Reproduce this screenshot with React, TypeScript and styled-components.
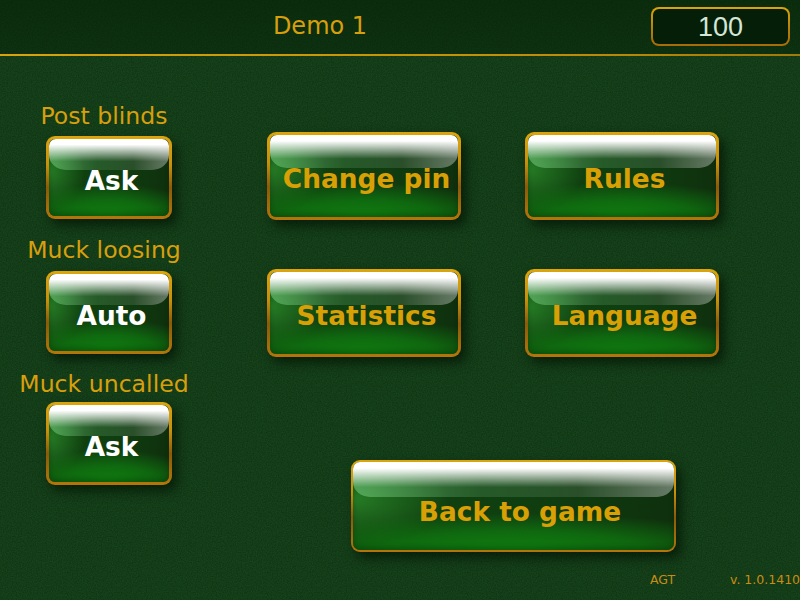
import React from "react";
import styled, { createGlobalStyle } from "styled-components";

const noise =
  "data:image/svg+xml;utf8," +
  encodeURIComponent(
    `<svg xmlns="http://www.w3.org/2000/svg" width="200" height="200"><filter id="n"><feTurbulence type="fractalNoise" baseFrequency="0.8" numOctaves="2" stitchTiles="stitch"/><feColorMatrix values="0 0 0 0 0  0 0 0 0 0  0 0 0 0 0  0 0 0 0.42 -0.1"/></filter><rect width="200" height="200" filter="url(#n)"/></svg>`
  );

const GlobalStyle = createGlobalStyle`
  html, body {
    margin: 0;
    padding: 0;
    background: #143f1c;
  }
  * {
    box-sizing: border-box;
  }
`;

const Page = styled.div`
  width: 800px;
  height: 600px;
  overflow: hidden;
  display: flex;
  flex-direction: column;
  font-family: "DejaVu Sans", Verdana, sans-serif;
  color: #d79f0c;
  background-color: #16441b;
  background-image: url("${noise}");
`;

const Header = styled.header`
  height: 56px;
  flex: none;
  display: flex;
  align-items: flex-start;
  padding-top: 7px;
  background: linear-gradient(rgba(3, 30, 4, 0.55), rgba(3, 30, 4, 0.4));
  border-bottom: 2px solid;
  border-image: linear-gradient(90deg, #d9a30c, #c08c08 70%, #a07a0a) 1;
`;

const Title = styled.h1`
  width: 640px;
  margin: 0 11px 0 0;
  font-size: 24px;
  font-weight: 400;
  line-height: 38px;
  text-align: center;
`;

const Balance = styled.div`
  width: 139px;
  height: 39px;
  padding-top: 2px;
  border: 2px solid transparent;
  border-radius: 8px;
  background:
    linear-gradient(#041e07, #041e07) padding-box,
    linear-gradient(#dba40c, #b67c0a 60%, #a76b08) border-box;
  color: #d6e6d6;
  font-family: "Liberation Sans", Arial, sans-serif;
  font-size: 27px;
  line-height: 33px;
  text-align: center;
`;

const Main = styled.main`
  flex: 1;
  display: flex;
`;

const SettingsColumn = styled.section`
  width: 208px;
  flex: none;
  padding-top: 46px;
  display: flex;
  flex-direction: column;
  align-items: center;
`;

const Setting = styled.div<{ $gap: number; $top: number }>`
  display: flex;
  flex-direction: column;
  align-items: center;
  gap: ${(p) => p.$gap}px;
  margin-top: ${(p) => p.$top}px;
`;

const SettingLabel = styled.div`
  font-size: 23.6px;
  line-height: 28px;
  white-space: nowrap;
`;

const SettingButtonSlot = styled.div`
  margin-left: 10px;
`;

const GlassButton = styled.button<{ $w: number; $h: number; $light?: boolean; $shift?: number; $pad?: number; $edge?: number }>`
  position: relative;
  display: block;
  width: ${(p) => p.$w}px;
  height: ${(p) => p.$h}px;
  padding: ${(p) => p.$pad ?? 6}px 0 0 ${(p) => p.$shift ?? 5}px;
  border: ${(p) => p.$edge ?? 3}px solid transparent;
  border-radius: 9px;
  background:
    radial-gradient(ellipse 80% 42% at 50% 100%, #0f7d0f 0%, rgba(15, 120, 15, 0.75) 50%, rgba(15, 90, 15, 0) 100%) padding-box,
    radial-gradient(ellipse 30% 50% at 0% 42%, rgba(40, 130, 40, 0.9), rgba(40, 130, 40, 0) 100%) padding-box,
    linear-gradient(90deg, #10420f, #0f3d10 60%, #0f300d) padding-box,
    linear-gradient(#dca50c 0%, #c98f0a 35%, #8e5a08 62%, #b5750a 100%) border-box;
  box-shadow:
    5px 6px 11px rgba(0, 15, 0, 0.65),
    inset 0 -3px 5px rgba(0, 30, 0, 0.3);
  color: ${(p) => (p.$light ? "#ffffff" : "#d9a006")};
  font-family: "DejaVu Sans", Verdana, sans-serif;
  font-size: 26.4px;
  font-weight: 700;
  line-height: 1;
  white-space: nowrap;

  &::before {
    content: "";
    position: absolute;
    top: 0;
    left: 0;
    right: 0;
    height: 40%;
    border-radius: 7px 7px 17px 17px / 7px 7px 15px 15px;
    background:
      linear-gradient(#ffffff 0%, #ffffff 18%, rgba(255, 255, 255, 0) 72%),
      linear-gradient(90deg, rgba(130, 215, 140, 0.5), rgba(110, 180, 120, 0.24) 40%, rgba(150, 165, 150, 0.2) 70%, rgba(200, 205, 200, 0.48));
  }
`;

const ActionsColumn = styled.section`
  flex: 1;
  padding: 76px 0 0 59px;
  display: flex;
  flex-direction: column;
`;

const ActionGrid = styled.div`
  display: grid;
  grid-template-columns: 194px 194px;
  grid-auto-rows: 88px;
  column-gap: 64px;
  row-gap: 49px;
`;

const BackRow = styled.div`
  margin: 103px 0 0 84px;
`;

const Footer = styled.footer`
  flex: none;
  height: 48px;
  display: flex;
  justify-content: flex-end;
  padding-top: 20px;
  font-size: 12.5px;
  line-height: 16px;
  color: #c98d12;
`;

const Maker = styled.span`
  width: 80px;
`;

const Version = styled.span`
  width: 70px;
  white-space: nowrap;
`;

export default function App() {
  return (
    <Page>
      <GlobalStyle />
      <Header>
        <Title>Demo 1</Title>
        <Balance>100</Balance>
      </Header>
      <Main>
        <SettingsColumn>
          <Setting $gap={6} $top={0}>
            <SettingLabel>Post blinds</SettingLabel>
            <SettingButtonSlot>
              <GlassButton $w={126} $h={83} $pad={8} $light>Ask</GlassButton>
            </SettingButtonSlot>
          </Setting>
          <Setting $gap={7} $top={17}>
            <SettingLabel>Muck loosing</SettingLabel>
            <SettingButtonSlot>
              <GlassButton $w={126} $h={83} $pad={8} $light>Auto</GlassButton>
            </SettingButtonSlot>
          </Setting>
          <Setting $gap={4} $top={16}>
            <SettingLabel>Muck uncalled</SettingLabel>
            <SettingButtonSlot>
              <GlassButton $w={126} $h={83} $pad={8} $light>Ask</GlassButton>
            </SettingButtonSlot>
          </Setting>
        </SettingsColumn>
        <ActionsColumn>
          <ActionGrid>
            <GlassButton $w={194} $h={88}>Change pin</GlassButton>
            <GlassButton $w={194} $h={88}>Rules</GlassButton>
            <GlassButton $w={194} $h={88}>Statistics</GlassButton>
            <GlassButton $w={194} $h={88}>Language</GlassButton>
          </ActionGrid>
          <BackRow>
            <GlassButton $w={325} $h={92} $shift={13} $pad={12} $edge={2}>Back to game</GlassButton>
          </BackRow>
        </ActionsColumn>
      </Main>
      <Footer>
        <Maker>AGT</Maker>
        <Version>v. 1.0.1410</Version>
      </Footer>
    </Page>
  );
}
